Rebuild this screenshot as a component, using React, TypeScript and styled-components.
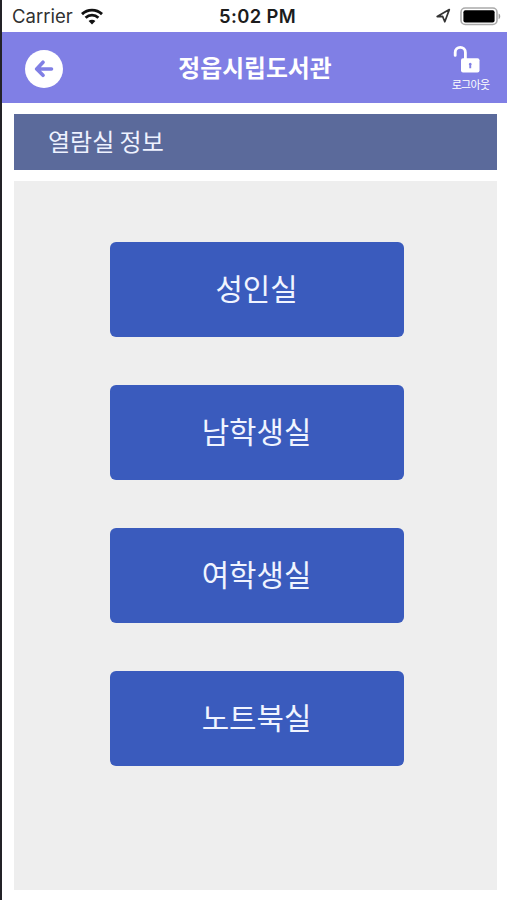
import React from "react";
import styled, { createGlobalStyle } from "styled-components";

const GlobalStyle = createGlobalStyle`
  * { box-sizing: border-box; }
  body { margin: 0; background: #fff; }
  button { font: inherit; border: 0; padding: 0; cursor: pointer; }
`;

const Screen = styled.div`
  width: 507px;
  height: 900px;
  overflow: hidden;
  display: flex;
  flex-direction: column;
  background: #fff;
  border-left: 2px solid #232227;
  font-family: "Noto Sans CJK KR", "Noto Sans", sans-serif;
`;

const StatusBar = styled.div`
  flex: none;
  height: 32px;
  display: grid;
  grid-template-columns: 1fr auto 1fr;
  align-items: center;
  padding: 0 6px 0 10px;
  font-family: Inter, sans-serif;
  font-size: 18.5px;
  color: #303030;
`;

const CarrierGroup = styled.div`
  display: flex;
  align-items: center;
  gap: 8px;
`;

const CarrierName = styled.span`
  width: 61px;
  white-space: nowrap;
`;

const Clock = styled.time`
  font-size: 18.4px;
  font-weight: 600;
  letter-spacing: 0.35px;
  margin-left: 2px;
  color: #1c1c1c;
`;

const PowerGroup = styled.div`
  display: flex;
  align-items: center;
  justify-content: flex-end;
  gap: 9px;
`;

const Header = styled.header`
  flex: none;
  height: 71px;
  display: grid;
  grid-template-columns: 90px 1fr 90px;
  align-items: center;
  background: #807fe5;
  color: #fff;
`;

const BackButton = styled.button`
  width: 38px;
  height: 38px;
  margin: 2px 0 0 23.4px;
  border-radius: 50%;
  background: #fff;
  display: grid;
  place-items: center;
`;

const Title = styled.h1`
  margin: 0 0 2px;
  padding-left: 1px;
  text-align: center;
  font-size: 23.8px;
  line-height: 34px;
  font-weight: 700;
`;

const LogoutButton = styled.button`
  display: flex;
  flex-direction: column;
  align-items: center;
  justify-self: end;
  width: 44px;
  margin: 1px 15px 0 0;
  background: none;
  color: #fff;
`;

const LogoutLabel = styled.span`
  font-size: 11px;
  line-height: 14px;
  letter-spacing: -0.7px;
  white-space: nowrap;
  margin: 4px 0 0 1px;
`;

const Content = styled.main`
  flex: 1;
  display: flex;
  flex-direction: column;
  gap: 11px;
  padding: 11px 10px 10px 12px;
`;

const SectionTitle = styled.h2`
  flex: none;
  height: 56px;
  margin: 0;
  padding-left: 34px;
  background: #5b6a9b;
  color: #eef2ff;
  font-size: 24px;
  font-weight: 400;
  line-height: 54px;
`;

const RoomPanel = styled.section`
  flex: 1;
  display: flex;
  flex-direction: column;
  align-items: center;
  gap: 48px;
  padding: 60.5px 0 0 2px;
  background: #eee;
`;

const RoomButton = styled.button`
  width: 294px;
  height: 95px;
  border-radius: 6px;
  background: #3a5bbd;
  color: #f0f4ff;
  && {
    font-size: 29.8px;
    line-height: 91px;
    padding-bottom: 4px;
  }
`;

const rooms = ["성인실", "남학생실", "여학생실", "노트북실"];

const WifiIcon = () => (
  <svg width="22" height="17" viewBox="0 0 22 17" fill="none" stroke="#111" strokeWidth="2.9">
    <path d="M1 6.1C6.7.8 15.3.8 21 6.1" />
    <path d="M4.6 9.7c3.7-3.4 9.1-3.4 12.8 0" />
    <path d="M11 16.4l-3.4-3.5c1.9-1.7 4.9-1.7 6.8 0z" fill="#111" stroke="none" />
  </svg>
);

const LocationIcon = () => (
  <svg width="16" height="16" viewBox="0 0 16 16" fill="none" stroke="#333" strokeWidth="1.7">
    <path d="M14.3 1.6L2.2 8.6l5.4-.2 2.2 5.4z" strokeLinejoin="round" />
  </svg>
);

const BatteryIcon = () => (
  <svg width="41" height="19" viewBox="0 0 41 19">
    <rect x="1" y="1" width="36" height="16.5" rx="4.2" fill="#fff" stroke="#aaa" strokeWidth="1.6" />
    <rect x="3.4" y="3.2" width="31.2" height="12.2" rx="2" fill="#000" />
    <path d="M38.6 6.5c2.2.8 2.2 4.8 0 5.7z" fill="#999" />
  </svg>
);

const ArrowIcon = () => (
  <svg width="20" height="18" viewBox="0 0 20 18" fill="none" stroke="#807fe5" strokeWidth="3.6" strokeLinecap="round" strokeLinejoin="round">
    <path d="M9 2.2L2.7 9 9 15.3M3 9h14.5" />
  </svg>
);

const UnlockIcon = () => (
  <svg width="34" height="28" viewBox="0 0 34 28">
    <path d="M2.2 10.4V7.4a5.1 5.1 0 0 1 10.2 0V14" fill="none" stroke="#fff" strokeWidth="2.8" strokeLinecap="round" />
    <rect x="8" y="13.3" width="18.5" height="14.2" rx="2" fill="#fff" />
    <path d="M16.3 20.3a1.4 1.4 0 1 1 1.9 0v2.9h-1.9z" fill="#807fe5" />
  </svg>
);

export default function App() {
  return (
    <Screen>
      <GlobalStyle />
      <StatusBar>
        <CarrierGroup>
          <CarrierName>Carrier</CarrierName>
          <WifiIcon />
        </CarrierGroup>
        <Clock>5:02 PM</Clock>
        <PowerGroup>
          <LocationIcon />
          <BatteryIcon />
        </PowerGroup>
      </StatusBar>
      <Header>
        <BackButton aria-label="뒤로">
          <ArrowIcon />
        </BackButton>
        <Title>정읍시립도서관</Title>
        <LogoutButton>
          <UnlockIcon />
          <LogoutLabel>로그아웃</LogoutLabel>
        </LogoutButton>
      </Header>
      <Content>
        <SectionTitle>열람실 정보</SectionTitle>
        <RoomPanel>
          {rooms.map((room) => (
            <RoomButton key={room}>{room}</RoomButton>
          ))}
        </RoomPanel>
      </Content>
    </Screen>
  );
}
